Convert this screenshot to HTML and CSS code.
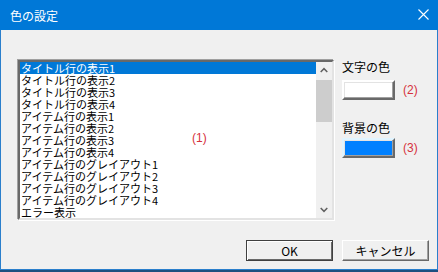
FILE: index.html
```html
<!DOCTYPE html>
<html>
<head>
    <title>色の設定</title>
    <link rel="stylesheet" href="styles.css">
</head>
<body>
    <div class="window">
        <div class="titlebar">
            <span class="title">色の設定</span>
            <svg class="close" width="11" height="11" viewBox="0 0 11 11">
                <path d="M0.5 0.5 L10.5 10.5 M10.5 0.5 L0.5 10.5" stroke="#fff" stroke-width="1.1" fill="none"/>
            </svg>
        </div>
        <div class="content">
            <div class="main">
                <div class="listbox">
                    <ul class="items">
                        <li class="selected">タイトル行の表示1</li>
                        <li>タイトル行の表示2</li>
                        <li>タイトル行の表示3</li>
                        <li>タイトル行の表示4</li>
                        <li>アイテム行の表示1</li>
                        <li>アイテム行の表示2</li>
                        <li>アイテム行の表示3</li>
                        <li>アイテム行の表示4</li>
                        <li>アイテム行のグレイアウト1</li>
                        <li>アイテム行のグレイアウト2</li>
                        <li>アイテム行のグレイアウト3</li>
                        <li>アイテム行のグレイアウト4</li>
                        <li>エラー表示</li>
                    </ul>
                    <span class="note note-list">(1)</span>
                    <div class="scrollbar">
                        <svg class="arrow" width="17" height="17" viewBox="0 0 17 17">
                            <path d="M5 10 L8.5 6.5 L12 10" stroke="#606060" stroke-width="1.6" fill="none"/>
                        </svg>
                        <div class="track"><div class="thumb"></div></div>
                        <svg class="arrow" width="17" height="17" viewBox="0 0 17 17">
                            <path d="M5 7 L8.5 10.5 L12 7" stroke="#606060" stroke-width="1.6" fill="none"/>
                        </svg>
                    </div>
                </div>
                <div class="side">
                    <div class="label">文字の色</div>
                    <div class="swatch-row">
                        <div class="swatch swatch-text"></div>
                        <span class="note">(2)</span>
                    </div>
                    <div class="label label-back">背景の色</div>
                    <div class="swatch-row">
                        <div class="swatch swatch-back"></div>
                        <span class="note">(3)</span>
                    </div>
                </div>
            </div>
            <div class="buttons">
                <button class="btn btn-default">OK</button>
                <button class="btn">キャンセル</button>
            </div>
        </div>
    </div>
</body>
</html>
```

FILE: styles.css
```css
body {
    margin: 0;
    background-color: #1c4f80;
    font-family: "Noto Sans CJK JP", "Liberation Sans", sans-serif;
    font-size: 12px;
}

.window {
    width: 436px;
    height: 269px;
    border: 1px solid #2a7fcc;
    border-top: none;
    background-color: #f0f0f0;
    display: flex;
    flex-direction: column;
}

.titlebar {
    height: 30px;
    margin: 0 -1px;
    background-color: #0078d7;
    color: #fff;
    display: flex;
    align-items: center;
    justify-content: space-between;
    padding: 0 9px 0 10px;
}

.title {
    font-size: 12px;
    line-height: 14px;
    margin-top: 1px;
}

.close {
    margin-top: -1px;
}

.content {
    flex: 1;
    padding: 29px 8px 0 17px;
    display: flex;
    flex-direction: column;
}

.main {
    display: flex;
    gap: 8px;
}

.listbox {
    position: relative;
    width: 312px;
    height: 156px;
    border: 2px solid;
    border-color: #696969 #e3e3e3 #e3e3e3 #696969;
    box-shadow: -1px -1px 0 #a0a0a0, 1px 1px 0 #fff;
    background-color: #fff;
    display: flex;
    margin-top: 1px;
}

.items {
    list-style: none;
    margin: 0;
    padding: 0;
    flex: 1;
}

.items li {
    height: 12px;
    line-height: 12px;
    font-size: 11px;
    color: #000;
    white-space: nowrap;
    padding-left: 1px;
}

.items li.selected {
    background-color: #0078d7;
    color: #fff;
}

.note {
    color: #d6303c;
    font-family: "Liberation Sans", sans-serif;
    font-size: 12px;
}

.note-list {
    position: absolute;
    left: 172px;
    top: 69px;
}

.scrollbar {
    width: 16px;
    background-color: #f0f0f0;
    display: flex;
    flex-direction: column;
}

.arrow {
    width: 16px;
    height: 17px;
    display: block;
}

.track {
    flex: 1;
}

.thumb {
    height: 42px;
    margin-top: 1px;
    background-color: #cdcdcd;
}

.side {
    display: flex;
    flex-direction: column;
    padding-top: 1px;
}

.label {
    height: 14px;
    line-height: 14px;
    margin-bottom: 6px;
}

.label-back {
    margin-top: 21px;
    margin-bottom: 3px;
}

.swatch-row {
    display: flex;
    align-items: center;
    gap: 8px;
}

.swatch {
    width: 49px;
    height: 16px;
    border: 2px solid;
    border-color: #fff #696969 #696969 #fff;
    box-shadow: inset -1px -1px 0 #a0a0a0, inset 1px 1px 0 #e3e3e3;
}

.swatch-text {
    background-color: #fff;
}

.swatch-back {
    background-color: #0080ff;
    border-color: #e0f4ff #696969 #696969 #e0f4ff;
}

.buttons {
    display: flex;
    justify-content: flex-end;
    gap: 9px;
    margin-top: 20px;
}

.btn {
    width: 87px;
    height: 21px;
    padding: 0;
    font-family: "Noto Sans CJK JP", "Liberation Sans", sans-serif;
    font-size: 12px;
    color: #000;
    background-color: #f0f0f0;
    border: 1px solid;
    border-color: #fff #696969 #696969 #fff;
    box-shadow: inset -1px -1px 0 #a0a0a0;
}

.btn-default {
    border: 1px solid #404040;
    box-shadow: inset 1px 1px 0 #fff, inset -1px -1px 0 #696969;
}
```
